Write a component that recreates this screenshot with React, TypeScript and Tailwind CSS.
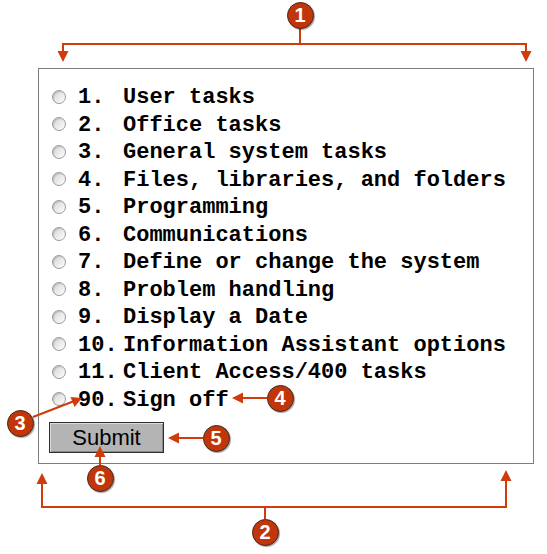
import React from "react";

const items: [string, string][] = [
  ["1.", "User tasks"],
  ["2.", "Office tasks"],
  ["3.", "General system tasks"],
  ["4.", "Files, libraries, and folders"],
  ["5.", "Programming"],
  ["6.", "Communications"],
  ["7.", "Define or change the system"],
  ["8.", "Problem handling"],
  ["9.", "Display a Date"],
  ["10.", "Information Assistant options"],
  ["11.", "Client Access/400 tasks"],
  ["90.", "Sign off"],
];

const LINE = "#cf3c0c";

function Badge({ n, x, y }: { n: string; x: number; y: number }) {
  return (
    <div
      className="absolute flex items-center justify-center w-[27px] h-[27px] rounded-full bg-[#c0360a] border border-[#4a2618] text-white font-bold text-[20px] leading-none font-['Liberation_Sans',Arial,sans-serif] shadow-[1px_1px_1px_rgba(0,0,0,0.35)]"
      style={{ left: x - 13.5, top: y - 13.5 }}
    >
      {n}
    </div>
  );
}

function Radio() {
  return (
    <div className="w-[14px] h-[14px] rounded-full border border-[#9a9a9a] bg-linear-to-br from-[#d4d4d4] to-white shadow-[inset_1px_1px_1px_rgba(0,0,0,0.15)] shrink-0" />
  );
}

export default function App() {
  return (
    <div className="relative w-[547px] h-[554px] bg-white overflow-hidden">
      <div className="ml-[38px] mt-[68px] w-[496px] h-[396px] border border-[#7c7c7c] pt-[14px] pl-[10px] flex flex-col">
        <div className="flex flex-col pl-[3px]">
          {items.map(([num, label]) => (
            <div key={num} className="flex items-center h-[27.5px]">
              <Radio />
              <span className="ml-[12px] w-[45px] pt-[2px] font-['Liberation_Mono','Courier_New',monospace] font-bold text-[22px] leading-[27.5px] text-black whitespace-pre">
                {num}
              </span>
              <span className="pt-[2px] font-['Liberation_Mono','Courier_New',monospace] font-bold text-[22px] leading-[27.5px] text-black whitespace-pre">
                {label}
              </span>
            </div>
          ))}
        </div>
        <button className="mt-[8.5px] w-[115px] h-[31px] bg-[#b4b4b4] border border-[#2e2e2e] shadow-[inset_1px_1px_0_#dcdcdc,inset_-1px_-1px_0_#8a8a8a] font-['Liberation_Sans',Arial,sans-serif] text-[22px] leading-none text-black flex items-center justify-center pt-[1px]">
          Submit
        </button>
      </div>

      <svg className="absolute inset-0" width="547" height="554" viewBox="0 0 547 554">
        <g stroke={LINE} strokeWidth="2" fill="none">
          <line x1="300" y1="28" x2="300" y2="44" />
          <polyline points="63,52 63,44 526,44 526,52" />
          <polyline points="42,483 42,507 506,507 506,480" />
          <line x1="265" y1="507" x2="265" y2="519" />
          <line x1="33" y1="417" x2="73" y2="401.5" />
          <line x1="267" y1="398" x2="242" y2="398" />
          <line x1="203" y1="438" x2="178" y2="438" />
          <line x1="100" y1="465" x2="100" y2="456" />
        </g>
        <g fill={LINE}>
          <polygon points="57.5,51 68.5,51 63,62" />
          <polygon points="520.5,51 531.5,51 526,62" />
          <polygon points="36.5,484 47.5,484 42,473" />
          <polygon points="500.5,481 511.5,481 506,470" />
          <polygon points="82,398 70.5,397 74.5,407" />
          <polygon points="232,398 243,392.5 243,403.5" />
          <polygon points="168,438 179,432.5 179,443.5" />
          <polygon points="100,446 94.5,457 105.5,457" />
        </g>
      </svg>

      <Badge n="1" x={300} y={15} />
      <Badge n="2" x={265} y={532} />
      <Badge n="3" x={20} y={423} />
      <Badge n="4" x={280} y={398} />
      <Badge n="5" x={216} y={438} />
      <Badge n="6" x={100} y={478} />
    </div>
  );
}
